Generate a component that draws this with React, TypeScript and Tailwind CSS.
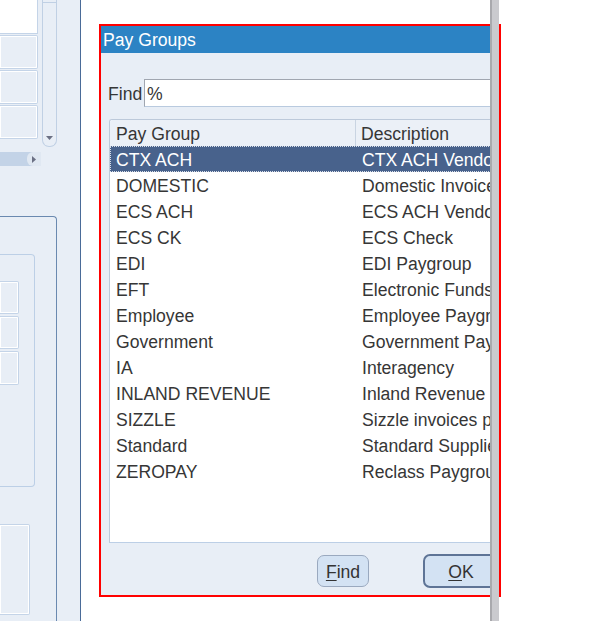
import React from "react";

const rows: [string, string][] = [
  ["CTX ACH", "CTX ACH Vendors"],
  ["DOMESTIC", "Domestic Invoices"],
  ["ECS ACH", "ECS ACH Vendors"],
  ["ECS CK", "ECS Check"],
  ["EDI", "EDI Paygroup"],
  ["EFT", "Electronic Funds Transfer"],
  ["Employee", "Employee Paygroup"],
  ["Government", "Government Payments"],
  ["IA", "Interagency"],
  ["INLAND REVENUE", "Inland Revenue"],
  ["SIZZLE", "Sizzle invoices paygroup"],
  ["Standard", "Standard Suppliers"],
  ["ZEROPAY", "Reclass Paygroup"],
];

function Cell({ h, w }: { h: string; w: string }) {
  return (
    <div
      className={`${h} ${w} border border-l-0 border-[#c4d4e8] rounded-r-[2px] shadow-[inset_1px_1px_0_#ffffff,inset_-1px_-1px_0_#ffffff] bg-[#e8eef6]`}
    />
  );
}

export default function App() {
  return (
    <div className="relative w-[601px] h-[621px] overflow-hidden bg-white flex font-['Liberation_Sans',Arial,sans-serif]">
      {/* Left background panel */}
      <div className="w-[81px] h-full bg-[#e8eef6] border-r border-[#4a6b98] flex flex-col shrink-0">
        <div className="flex items-start h-[147px]">
          <div className="w-[38px] flex flex-col">
            <div className="h-[34px] bg-white border-b border-r border-[#c4d4e8]" />
            <div className="flex flex-col gap-[1px] mt-[1px]">
              <Cell h="h-[34px]" w="w-[38px]" />
              <Cell h="h-[34px]" w="w-[38px]" />
              <Cell h="h-[34px]" w="w-[38px]" />
            </div>
          </div>
          <div className="ml-[4px] w-[15px] h-[147px] border-x border-b border-[#c0d0e4] rounded-b-[7px] flex flex-col">
            <div className="h-[3px] border-b border-[#c0d0e4]" />
            <div className="flex-1" />
            <div className="h-[14px] flex items-start justify-center pt-[4px]">
              <svg width="7" height="4" viewBox="0 0 7 4">
                <polygon points="0,0 7,0 3.5,4" fill="#6b7084" />
              </svg>
            </div>
          </div>
        </div>
        <div className="mt-[5px] w-[41px] h-[14px] bg-[#c3d3e7] flex justify-end">
          <div className="w-[14px] h-full rounded-l-[6px] bg-[#e0e8f2] flex items-center justify-center">
            <svg width="4" height="7" viewBox="0 0 4 7">
              <polygon points="0,0 4,3.5 0,7" fill="#6b7084" />
            </svg>
          </div>
        </div>
        <div className="mt-[50px] w-[57px] flex-1 border-t border-r border-[#6a89b0] rounded-tr-[4px] flex flex-col">
          <div className="mt-[37px] w-[35px] h-[233px] border-y border-r border-[#bccfe6] rounded-r-[4px] flex flex-col">
            <div className="mt-[26px] flex flex-col gap-[2px]">
              <Cell h="h-[33px]" w="w-[19px]" />
              <Cell h="h-[33px]" w="w-[19px]" />
              <Cell h="h-[34px]" w="w-[19px]" />
            </div>
          </div>
          <div className="mt-[37px]">
            <Cell h="h-[91px]" w="w-[30px]" />
          </div>
        </div>
      </div>

      {/* Dialog */}
      <div className="absolute left-[99px] top-[24px] w-[402px] h-[573px] border-2 border-[#ff0000] bg-[#e8eef6] flex flex-col overflow-hidden text-[17.6px] leading-none text-[#363636]">
        <div className="h-[27px] shrink-0 bg-[#2c83c4] text-white pl-[2px] pt-[3px] flex items-center">
          Pay Groups
        </div>
        <div className="flex-1 flex flex-col pl-[7px]">
          <div className="mt-[26px] h-[28px] flex items-center">
            <span className="w-[36px] pt-[4px]">Find</span>
            <div className="flex-1 h-[28px] bg-white border-t border-l border-[#a0a6b0] border-b-[#b9cadf] border-b flex items-center pl-[2px] pt-[3px]">
              %
            </div>
          </div>
          <div className="mt-[12px] ml-[1px] h-[424px] bg-white border-t border-l border-b border-[#bcc9da] border-b-[#bccfe6] rounded-tl-[3px] flex flex-col overflow-hidden">
            <div className="h-[26px] bg-[#ebf0f7] flex shrink-0">
              <div className="w-[246px] shrink-0 h-full border-r border-[#c9d4e2] pl-[6px] pt-[3px] flex items-center">Pay Group</div>
              <div className="pl-[5px] pt-[3px] flex items-center whitespace-nowrap">Description</div>
            </div>
            {rows.map(([a, b], i) => (
              <div
                key={a}
                className={
                  i === 0
                    ? "h-[26px] shrink-0 flex items-center pt-[3px] bg-[#48628c] text-white border border-dotted border-[#d8dee8]"
                    : "h-[26px] shrink-0 flex items-center pt-[3px] border border-transparent"
                }
              >
                <div className="w-[245px] shrink-0 pl-[5px] whitespace-nowrap">{a}</div>
                <div className="pl-[6px] whitespace-nowrap">{b}</div>
              </div>
            ))}
          </div>
          <div className="flex items-start">
            <button className="mt-[12px] ml-[209px] w-[52px] h-[32px] shrink-0 rounded-[7px] border border-[#9aa9bf] bg-[#d3e2f3] text-[#333] pt-[3px] flex items-center justify-center">
              <span className="underline underline-offset-[2px]">F</span>ind
            </button>
            <button className="mt-[11px] ml-[54px] w-[76px] h-[34px] shrink-0 rounded-[7px] border-2 border-[#5e7496] bg-[#d3e2f3] text-[#333] pt-[3px] flex items-center justify-center">
              <span className="underline underline-offset-[2px]">O</span>K
            </button>
          </div>
        </div>
      </div>

      {/* Gray vertical window edge */}
      <div className="absolute left-[490px] top-0 w-[9px] h-full bg-[#cacace] border-l-2 border-[#a9a9ad]" />
    </div>
  );
}
